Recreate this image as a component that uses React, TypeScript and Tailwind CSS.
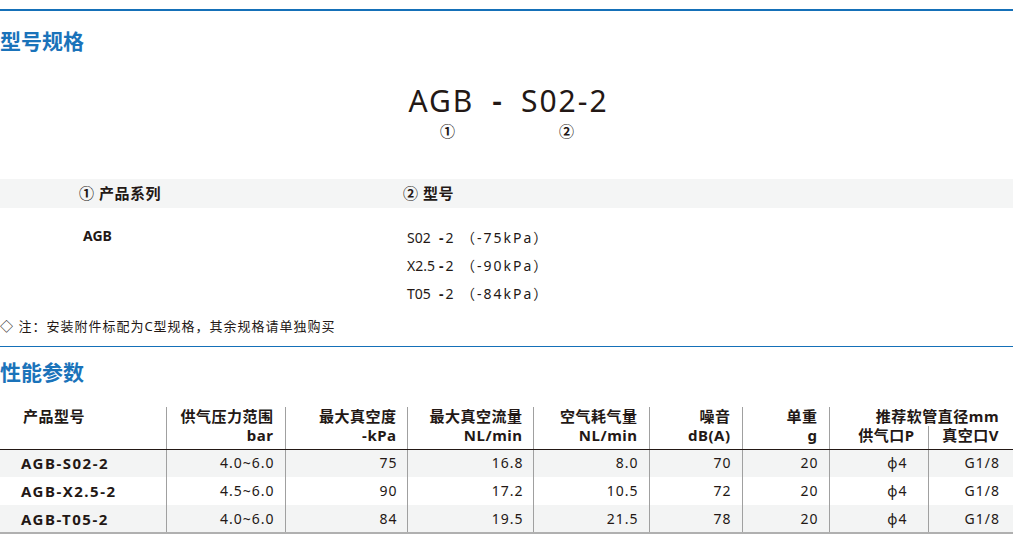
import React from 'react';

const models = [
  { code: 'S02', kpa: '-75kPa' },
  { code: 'X2.5', kpa: '-90kPa' },
  { code: 'T05', kpa: '-84kPa' },
];

const rows = [
  { name: 'AGB-S02-2', range: '4.0~6.0', vac: '75', flow: '16.8', air: '8.0', noise: '70', weight: '20', p: 'φ4', v: 'G1/8' },
  { name: 'AGB-X2.5-2', range: '4.5~6.0', vac: '90', flow: '17.2', air: '10.5', noise: '72', weight: '20', p: 'φ4', v: 'G1/8' },
  { name: 'AGB-T05-2', range: '4.0~6.0', vac: '84', flow: '19.5', air: '21.5', noise: '78', weight: '20', p: 'φ4', v: 'G1/8' },
];

const SectionTitle: React.FC<{ children: React.ReactNode; className?: string }> = ({ children, className }) => (
  <h2 className={`text-[21px] leading-[28px] font-bold text-[#1a73ba] ${className ?? ''}`}>{children}</h2>
);

const App: React.FC = () => {
  return (
    <div className="w-[1017px] h-[539px] overflow-hidden bg-white pt-[9px] text-[#231815] font-['Noto_Sans','Noto_Sans_CJK_SC',sans-serif]">
      {/* 型号规格 */}
      <div className="h-[1.5px] w-[1013px] bg-[#1570b8]" />
      <SectionTitle className="mt-[16px]">型号规格</SectionTitle>

      <div className="mt-[28px] flex justify-center text-[30px] leading-[36px] tracking-[2px]">
        <span>AGB</span>
        <span className="ml-[18px] font-semibold">-</span>
        <span className="ml-[17px]">S02-2</span>
      </div>
      <div className="mt-[3px] flex pl-[440px] text-[15px] font-semibold leading-[18px]">
        <span className="w-[15px] text-center">①</span>
        <span className="ml-[104px] w-[15px] text-center">②</span>
      </div>

      <div className="mt-[39px] flex h-[29px] w-[1013px] items-center bg-[#f4f5f5] text-[15px] font-bold tracking-[0.5px]">
        <div className="w-[403px] pl-[79px]">① 产品系列</div>
        <div>② 型号</div>
      </div>

      <div className="mt-[16px] flex">
        <div className="w-[407px] pl-[83px] text-[14px] font-bold leading-[24px]">AGB</div>
        <div className="flex flex-col text-[14px] leading-[28px]">
          {models.map((m) => (
            <div key={m.code} className="flex">
              <span className="w-[32px]">{m.code}</span>
              <span className="w-[22px] tracking-[2px]">
                <span className="font-bold">-</span>2
              </span>
              <span className="tracking-[2px]">（{m.kpa}）</span>
            </div>
          ))}
        </div>
      </div>

      <p className="mt-[8px] text-[13px] leading-[20px] tracking-[1px]">◇ 注：安装附件标配为C型规格，其余规格请单独购买</p>

      {/* 性能参数 */}
      <div className="mt-[10px] h-[1.5px] w-[1013px] bg-[#1570b8]" />
      <SectionTitle className="mt-[11px]">性能参数</SectionTitle>

      <table className="mt-[21px] w-[1013px] table-fixed border-collapse">
        <colgroup>
          <col className="w-[166px]" />
          <col className="w-[119px]" />
          <col className="w-[122px]" />
          <col className="w-[126px]" />
          <col className="w-[116px]" />
          <col className="w-[93px]" />
          <col className="w-[87px]" />
          <col className="w-[99px]" />
          <col className="w-[85px]" />
        </colgroup>
        <thead className="text-[15px] font-bold leading-[19px] tracking-[0.5px]">
          <tr className="h-[19px]">
            <th rowSpan={2} className="border-b border-[#231815] pl-[23px] text-left align-top font-bold">产品型号</th>
            <th rowSpan={2} className="border-b border-l border-b-[#231815] border-l-[#a0a0a0] pr-[11px] text-right align-top font-bold">供气压力范围<br />bar</th>
            <th rowSpan={2} className="border-b border-l border-b-[#231815] border-l-[#a0a0a0] pr-[10px] text-right align-top font-bold">最大真空度<br />-kPa</th>
            <th rowSpan={2} className="border-b border-l border-b-[#231815] border-l-[#a0a0a0] pr-[10px] text-right align-top font-bold">最大真空流量<br />NL/min</th>
            <th rowSpan={2} className="border-b border-l border-b-[#231815] border-l-[#a0a0a0] pr-[11px] text-right align-top font-bold">空气耗气量<br />NL/min</th>
            <th rowSpan={2} className="border-b border-l border-b-[#231815] border-l-[#a0a0a0] pr-[11px] text-right align-top font-bold">噪音<br />dB(A)</th>
            <th rowSpan={2} className="border-b border-l border-b-[#231815] border-l-[#a0a0a0] pr-[11px] text-right align-top font-bold">单重<br />g</th>
            <th colSpan={2} className="border-l border-[#a0a0a0] pr-[14px] text-right align-top font-bold">推荐软管直径mm</th>
          </tr>
          <tr className="h-[23px]">
            <th className="border-b border-l border-b-[#231815] border-l-[#a0a0a0] pr-[13px] text-right align-top font-bold">供气口P</th>
            <th className="border-b border-l border-b-[#231815] border-l-[#a0a0a0] pr-[14px] text-right align-top font-bold">真空口V</th>
          </tr>
        </thead>
        <tbody className="text-[14px] leading-[20px] tracking-[1px]">
          {rows.map((r, i) => {
            const isLast = i === rows.length - 1;
            const cell = `border-l border-[#a0a0a0] text-right ${isLast ? 'border-b-2 border-b-[#b0b0b0]' : ''}`;
            return (
              <tr key={r.name} className={`h-[28px] ${i % 2 === 0 ? 'bg-[#f3f4f4]' : 'bg-white'}`}>
                <td className={`pl-[21px] text-[15px] font-bold tracking-[1.5px] ${isLast ? 'border-b-2 border-b-[#b0b0b0]' : ''}`}>{r.name}</td>
                <td className={`${cell} pr-[10px]`}>{r.range}</td>
                <td className={`${cell} pr-[9px]`}>{r.vac}</td>
                <td className={`${cell} pr-[9px]`}>{r.flow}</td>
                <td className={`${cell} pr-[10px]`}>{r.air}</td>
                <td className={`${cell} pr-[10px]`}>{r.noise}</td>
                <td className={`${cell} pr-[10px]`}>{r.weight}</td>
                <td className={`${cell} pr-[20px]`}>{r.p}</td>
                <td className={`${cell} pr-[13px]`}>{r.v}</td>
              </tr>
            );
          })}
        </tbody>
      </table>
    </div>
  );
};

export default App;
